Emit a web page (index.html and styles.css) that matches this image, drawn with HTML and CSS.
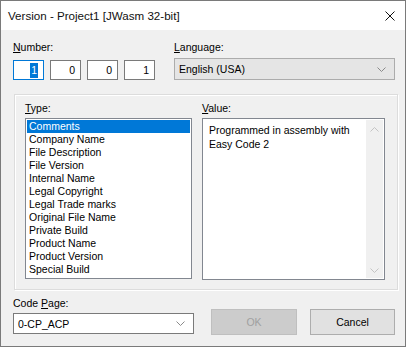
FILE: index.html
```html
<!DOCTYPE html>
<html>
<head>
    <link rel="stylesheet" href="styles.css">
</head>
<body>
    <div class="window">
        <div class="titlebar">
            <span class="title">Version - Project1 [JWasm 32-bit]</span>
            <svg class="close" viewBox="0 0 10 10" fill="none" stroke="#111" stroke-width="1">
                <line x1="0.5" y1="0.5" x2="9.5" y2="9.5"></line>
                <line x1="9.5" y1="0.5" x2="0.5" y2="9.5"></line>
            </svg>
        </div>

        <div class="content">
            <div class="top-row">
                <div class="number-block">
                    <label><u>N</u>umber:</label>
                    <div class="number-fields">
                        <div class="num-box focused"><span class="sel">1</span></div>
                        <div class="num-box">0</div>
                        <div class="num-box">0</div>
                        <div class="num-box">1</div>
                    </div>
                </div>
                <div class="language-block">
                    <label><u>L</u>anguage:</label>
                    <div class="combo grey">
                        <span>English (USA)</span>
                        <svg class="chevron" viewBox="0 0 9 5" fill="none" stroke="#8a8a8a" stroke-width="1">
                            <polyline points="0.5 0.5 4.5 4.5 8.5 0.5"></polyline>
                        </svg>
                    </div>
                </div>
            </div>

            <div class="group">
                <div class="type-block">
                    <label><u>T</u>ype:</label>
                    <ul class="listbox">
                        <li class="selected">Comments</li>
                        <li>Company Name</li>
                        <li>File Description</li>
                        <li>File Version</li>
                        <li>Internal Name</li>
                        <li>Legal Copyright</li>
                        <li>Legal Trade marks</li>
                        <li>Original File Name</li>
                        <li>Private Build</li>
                        <li>Product Name</li>
                        <li>Product Version</li>
                        <li>Special Build</li>
                    </ul>
                </div>
                <div class="value-block">
                    <label><u>V</u>alue:</label>
                    <div class="memo">
                        <div class="memo-text">Programmed in assembly with<br>Easy Code 2</div>
                        <div class="scrollbar">
                            <svg class="arrow" viewBox="0 0 9 5" fill="none" stroke="#c4c4c4" stroke-width="1">
                                <polyline points="0.5 4.5 4.5 0.5 8.5 4.5"></polyline>
                            </svg>
                            <svg class="arrow" viewBox="0 0 9 5" fill="none" stroke="#c4c4c4" stroke-width="1">
                                <polyline points="0.5 0.5 4.5 4.5 8.5 0.5"></polyline>
                            </svg>
                        </div>
                    </div>
                </div>
            </div>

            <div class="bottom-row">
                <div class="codepage-block">
                    <label>Code <u>P</u>age:</label>
                    <div class="combo white">
                        <span>0-CP_ACP</span>
                        <svg class="chevron" viewBox="0 0 9 5" fill="none" stroke="#8a8a8a" stroke-width="1">
                            <polyline points="0.5 0.5 4.5 4.5 8.5 0.5"></polyline>
                        </svg>
                    </div>
                </div>
                <button class="btn disabled">OK</button>
                <button class="btn">Cancel</button>
            </div>
        </div>
    </div>
</body>
</html>
```

FILE: styles.css
```css
* {
    box-sizing: border-box;
}
body {
    margin: 0;
    font-family: "Liberation Sans", Arial, sans-serif;
    font-size: 10.5px;
    color: #000;
    background: #f0f0f0;
}
label {
    display: block;
    height: 15px;
    line-height: 15px;
}
.window {
    width: 406px;
    height: 347px;
    border: 1px solid #7a7a7a;
    background: #f0f0f0;
    display: flex;
    flex-direction: column;
}
.titlebar {
    height: 29px;
    background: #fff;
    display: flex;
    align-items: center;
    justify-content: space-between;
    padding: 0 10px 0 7px;
}
.title {
    font-size: 11.6px;
    color: #111;
}
.close {
    width: 10px;
    height: 10px;
}
.content {
    padding: 10px 0 0 12px;
}
.top-row {
    display: flex;
}
.number-block {
    width: 161px;
}
.number-fields {
    display: flex;
    gap: 6px;
    margin-top: 5px;
}
.num-box {
    width: 31px;
    height: 20px;
    border: 1px solid #7a7a7a;
    background: #fff;
    text-align: right;
    padding-right: 5px;
    line-height: 18px;
}
.num-box.focused {
    border-color: #0078d7;
}
.sel {
    background: #0078d7;
    color: #fff;
    padding: 1px 1px 2px;
}
.combo {
    display: flex;
    align-items: center;
    justify-content: space-between;
    border: 1px solid #acacac;
    padding: 0 8px 0 4px;
}
.combo.grey {
    width: 221px;
    height: 22px;
    margin-top: 3px;
    background: #e5e5e5;
}
.combo.white {
    width: 181px;
    height: 21px;
    margin-top: 2px;
    background: #fff;
    border-color: #7a7a7a;
}
.chevron {
    width: 9px;
    height: 5px;
}
.group {
    width: 384px;
    height: 196px;
    margin: 14px 0 0 1px;
    border: 1px solid #dcdcdc;
    box-shadow: inset 1px 1px 0 #fff, 1px 1px 0 #fff;
    display: flex;
    gap: 10px;
    padding: 6px 0 0 10px;
}
.listbox {
    list-style: none;
    margin: 2px 0 0;
    width: 167px;
    height: 161px;
    border: 1px solid #828790;
    background: #fff;
    padding: 1px;
}
.listbox li {
    height: 13px;
    line-height: 13px;
    padding-left: 2px;
}
.listbox li.selected {
    background: #0078d7;
    color: #fff;
}
.memo {
    margin-top: 2px;
    width: 183px;
    height: 162px;
    border: 1px solid #828790;
    background: #fff;
    display: flex;
    justify-content: space-between;
    padding: 1px;
}
.memo-text {
    padding: 3px 0 0 5px;
    line-height: 14px;
    white-space: nowrap;
}
.scrollbar {
    width: 17px;
    background: #f0f0f0;
    display: flex;
    flex-direction: column;
    justify-content: space-between;
    align-items: center;
    padding: 7px 0 5px;
}
.arrow {
    width: 9px;
    height: 5px;
}
.bottom-row {
    display: flex;
    align-items: flex-end;
    margin-top: 6px;
}
.btn {
    height: 26px;
    width: 86px;
    font-family: "Liberation Sans", Arial, sans-serif;
    font-size: 10.5px;
    background: #e1e1e1;
    border: 1px solid #adadad;
    margin-bottom: -1px;
}
.btn.disabled {
    margin-left: 17px;
    background: #cccccc;
    border-color: #bfbfbf;
    color: #a0a0a0;
}
.btn + .btn {
    margin-left: 13px;
    width: 85px;
}
```
